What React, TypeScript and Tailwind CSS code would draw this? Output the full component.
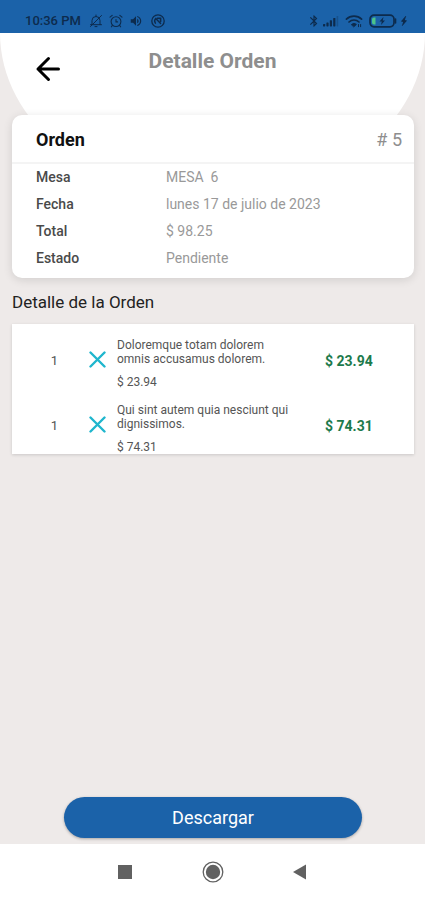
import { MdBluetooth, MdVolumeUp, MdBolt } from 'react-icons/md'

const order = {
    number: 5,
    fields: [
        { label: 'Mesa', value: 'MESA  6' },
        { label: 'Fecha', value: 'lunes 17 de julio de 2023' },
        { label: 'Total', value: '$ 98.25' },
        { label: 'Estado', value: 'Pendiente' },
    ],
    items: [
        {
            quantity: 1,
            name: 'Doloremque totam dolorem omnis accusamus dolorem.',
            price: '$ 23.94',
            total: '$ 23.94',
        },
        {
            quantity: 1,
            name: 'Qui sint autem quia nesciunt qui dignissimos.',
            price: '$ 74.31',
            total: '$ 74.31',
        },
    ],
}

function BellOffIcon() {
    return (
        <svg
            viewBox="0 0 14 14"
            className="size-3.5"
            fill="none"
            stroke="currentColor"
            strokeLinecap="round"
            strokeLinejoin="round"
        >
            <path d="M3 10.5V6.5a4 4 0 0 1 8 0v4M1.5 10.7h11M6 12.6h2M7 1v1.5M12.5 1.5l-11 11" />
        </svg>
    )
}

function AlarmIcon() {
    return (
        <svg
            viewBox="0 0 14 14"
            className="size-3.5"
            fill="none"
            stroke="currentColor"
            strokeWidth="1.1"
            strokeLinecap="round"
        >
            <circle cx="7" cy="7.6" r="4.9" />
            <path d="M7 5.5v2.4h1.6M1 3.2 3.2 1.3M13 3.2l-2.2-1.9M3.4 11.4l-1 1.4M10.6 11.4l1 1.4" />
        </svg>
    )
}

function NfcIcon() {
    return (
        <svg
            viewBox="0 0 14 14"
            className="size-3.5"
            fill="none"
            stroke="currentColor"
            strokeLinecap="round"
        >
            <circle cx="7" cy="7" r="6.2" strokeWidth="1.3" />
            <path d="M4.4 9.2a3.6 3.6 0 0 1 .4-4.6l4.8 5" strokeWidth="1.4" />
            <path d="M6.4 4.2h3.2v3.4" strokeWidth="1.6" />
        </svg>
    )
}

function SignalIcon() {
    return (
        <svg viewBox="0 0 16 12" className="h-3 w-4" fill="currentColor">
            <rect x="0" y="9" width="2.2" height="2.4" rx=".6" />
            <rect x="3.4" y="7.4" width="2.2" height="4" rx=".6" />
            <rect x="6.8" y="5.2" width="2.2" height="6.2" rx=".6" />
            <rect x="10.2" y="3" width="2.2" height="8.4" rx=".6" />
            <rect x="13.6" y="1" width="1.6" height="10.4" rx=".6" opacity=".3" />
        </svg>
    )
}

function WifiIcon() {
    return (
        <svg
            viewBox="0 0 18 14"
            className="h-3.5 w-4.5"
            fill="none"
            stroke="currentColor"
            strokeWidth="1.7"
            strokeLinecap="round"
        >
            <path d="M1.4 5.2a11 11 0 0 1 15.2 0M4 8a7.2 7.2 0 0 1 10 0" />
            <path d="M6.6 10.4a3.6 3.6 0 0 1 4.8 0L9 12.6Z" fill="currentColor" strokeWidth="1" />
            <path d="M13.5 10.5v2.2M15.6 10.5v2.2" strokeWidth="1" />
        </svg>
    )
}

function BatteryIcon() {
    return (
        <svg viewBox="0 0 28 14" className="h-3.5 w-7" fill="none">
            <rect x="1" y="1.2" width="24" height="11.6" rx="4" stroke="currentColor" strokeWidth="1.7" />
            <path d="M26.5 5v4" stroke="currentColor" strokeWidth="1.6" strokeLinecap="round" />
            <path d="M6.5 3.4v7.2H5a2 2 0 0 1-2-2V5.4a2 2 0 0 1 2-2Z" fill="#4cc38a" />
            <path d="M14.5 3 10.5 7.6h2.3L12 11l4-4.6h-2.3Z" fill="currentColor" />
        </svg>
    )
}

function StatusBar() {
    return (
        <div className="flex h-[33px] items-end justify-between bg-[#1b62a9] pr-3.5 pb-1 pl-[25px] text-[#0d2b4d]">
            <div className="flex items-center gap-1.5">
                <span className="mr-0.5 text-[13px] leading-4 font-medium">10:36 PM</span>
                <BellOffIcon />
                <AlarmIcon />
                <MdVolumeUp className="size-3.5" />
                <div className="pl-0.5">
                    <NfcIcon />
                </div>
            </div>
            <div className="flex h-4 items-center">
                <MdBluetooth className="mr-0.5 size-3.5" />
                <SignalIcon />
                <div className="px-1.5">
                    <WifiIcon />
                </div>
                <BatteryIcon />
                <MdBolt className="size-3.5 rotate-12" />
            </div>
        </div>
    )
}

function Header() {
    return (
        <header className="h-[165px] rounded-b-[50%_100%] bg-white">
            <div className="grid grid-cols-[1fr_auto_1fr] items-start px-[30px] pt-4">
                <button aria-label="Volver" className="mt-0.5 size-9 text-black">
                    <svg
                        viewBox="0 0 36 36"
                        className="size-9"
                        fill="none"
                        stroke="currentColor"
                        strokeWidth="3"
                        strokeLinecap="round"
                        strokeLinejoin="round"
                    >
                        <path d="M28.5 18H8M18.5 7.5 8 18l10.5 10.5" />
                    </svg>
                </button>
                <h1 className="text-[21px] leading-6 font-bold text-[#8e8e8e]">Detalle Orden</h1>
            </div>
        </header>
    )
}

function OrderCard() {
    return (
        <section className="relative mr-[11px] ml-3 -mt-[83px] rounded-[10px] bg-white pb-1.5 shadow-[0_2px_10px_rgba(0,0,0,0.12)]">
            <div className="flex h-[49px] items-center justify-between border-b-2 border-[#f4f4f4] pt-0.5 pr-3 pl-6">
                <h2 className="text-lg font-bold text-[#111111]">Orden</h2>
                <span className="text-lg text-[#8e8e8e]"># {order.number}</span>
            </div>
            <dl className="grid grid-cols-[130px_1fr] pl-6 text-sm leading-[27px]">
                {order.fields.map((field) => (
                    <div key={field.label} className="contents">
                        <dt className="font-medium text-[#4a4a4a]">{field.label}</dt>
                        <dd className="whitespace-pre text-[#999999]">{field.value}</dd>
                    </div>
                ))}
            </dl>
        </section>
    )
}

function OrderItem({ item }: { item: (typeof order.items)[number] }) {
    return (
        <li className="flex items-center">
            <span className="w-[77px] pt-2 pl-2 text-center text-[13px] text-[#555555]">
                {item.quantity}
            </span>
            <svg
                viewBox="0 0 17 23"
                className="mr-[11px] h-[23px] w-[17px]"
                stroke="#1fb6cd"
                strokeWidth="2.4"
                strokeLinecap="round"
            >
                <path d="m1.5 7.5 14 14m0-14-14 14" />
            </svg>
            <div className="w-[174px] pt-3.5 text-xs leading-3.5 text-[#555555]">
                <p>{item.name}</p>
                <p className="pt-[9px]">{item.price}</p>
            </div>
            <span className="flex-1 pt-2 pl-[34px] text-sm font-bold text-[#1d7a4c]">{item.total}</span>
        </li>
    )
}

function App() {
    return (
        <div className="flex min-h-screen flex-col bg-[#eeeae9] font-[Roboto,sans-serif]">
            <StatusBar />
            <Header />
            <OrderCard />
            <main className="flex flex-1 flex-col pt-3 pr-[11px] pb-1.5 pl-3">
                <h2 className="text-[17px] leading-6 text-[#222222]">Detalle de la Orden</h2>
                <ul className="mt-2.5 bg-white shadow-[0_1px_3px_rgba(0,0,0,0.15)]">
                    {order.items.map((item) => (
                        <OrderItem key={item.name} item={item} />
                    ))}
                </ul>
                <button className="mx-auto mt-auto h-[41px] w-[74%] rounded-full bg-[#1b62a9] text-lg text-white shadow-[0_1px_3px_rgba(0,0,0,0.3)]">
                    Descargar
                </button>
            </main>
            <nav className="flex h-14 items-center justify-center gap-[66px] bg-white text-[#616161]">
                <button aria-label="Recientes">
                    <svg viewBox="0 0 22 22" className="size-[22px]" fill="currentColor">
                        <rect x="4" y="4" width="14" height="14" />
                    </svg>
                </button>
                <button aria-label="Inicio">
                    <svg viewBox="0 0 22 22" className="size-[22px]" fill="currentColor">
                        <circle cx="11" cy="11" r="9.8" fill="none" stroke="currentColor" strokeWidth="1.3" />
                        <circle cx="11" cy="11" r="7.2" />
                    </svg>
                </button>
                <button aria-label="Atrás">
                    <svg viewBox="0 0 22 22" className="size-[22px]" fill="currentColor">
                        <path d="M3 11 16 3.5v15Z" />
                    </svg>
                </button>
            </nav>
        </div>
    )
}

export default App
